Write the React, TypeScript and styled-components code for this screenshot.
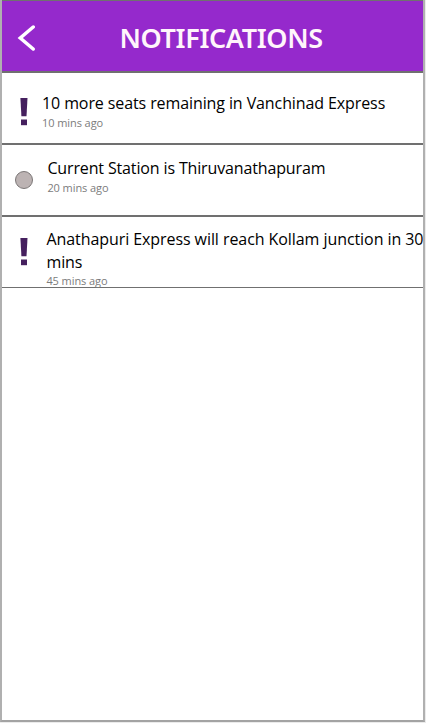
import React from "react";
import styled, { createGlobalStyle } from "styled-components";

const GlobalStyle = createGlobalStyle`
  *, *::before, *::after { box-sizing: border-box; }
  body { margin: 0; background: #fff; overflow: hidden; }
`;

const Page = styled.div`
  width: 426px;
  height: 723px;
  padding: 0 1px 1px 0;
  background: #ebebeb;
`;

const Screen = styled.main`
  width: 425px;
  height: 722px;
  overflow: hidden;
  background: #fff;
  border: solid #b0b0b0;
  border-width: 0 2px 2px 2px;
  border-bottom-color: #a3a3a3;
  font-family: "Open Sans", "Noto Sans", sans-serif;
`;

const Header = styled.header`
  display: flex;
  align-items: center;
  height: 73px;
  padding: 2px 0 0 15px;
  background: #9529cc;
  border-top: 1px solid #707070;
  border-bottom: 2px solid #707070;
`;

const BackButton = styled.button`
  display: flex;
  width: 20px;
  height: 28px;
  padding: 0;
  border: 0;
  background: none;
`;

const Title = styled.h1`
  margin: 2px 0 0 82.5px;
  color: #fff5fb;
  font-family: "Noto Sans", sans-serif;
  font-size: 27px;
  font-weight: 600;
  line-height: 36px;
  letter-spacing: -0.37px;
  white-space: nowrap;
`;

const List = styled.ul`
  margin: 0;
  padding: 0;
  list-style: none;
`;

const Item = styled.li<{ $last?: boolean }>`
  display: flex;
  height: ${(p) => (p.$last ? 71 : 72)}px;
  border-bottom: ${(p) => (p.$last ? 1 : 2)}px solid #707070;
`;

const Marker = styled.div<{ $top: number; $left: number }>`
  flex: none;
  width: 40px;
  padding: ${(p) => p.$top}px 0 0 ${(p) => p.$left}px;

  svg { display: block; }
`;

const Copy = styled.div<{ $top: number; $indent: number }>`
  flex: none;
  padding: ${(p) => p.$top}px 0 0 ${(p) => p.$indent}px;
`;

const Message = styled.p<{ $spacing: number }>`
  margin: 0;
  color: #000;
  font-size: 16px;
  font-weight: 400;
  line-height: 23px;
  letter-spacing: ${(p) => p.$spacing}px;
  white-space: pre;
`;

const Time = styled.time<{ $tight: boolean }>`
  display: block;
  margin-top: ${(p) => (p.$tight ? -1 : 0)}px;
  color: #7c7c7c;
  font-size: 11px;
  line-height: 15px;
  letter-spacing: -0.08px;
  white-space: nowrap;
`;

const Alert = () => (
  <svg width="8" height="28" viewBox="0 0 8 28" fill="#45205e" aria-hidden="true">
    <path d="M0.4 0H7.5L6.5 18.3H1.4Z" />
    <path d="M1 21.5H7V27.2H1Z" />
  </svg>
);

const Dot = () => (
  <svg width="18" height="18" viewBox="0 0 18 18" aria-hidden="true">
    <circle cx="9" cy="9" r="8.5" fill="#bcb3b3" stroke="#7b7777" />
  </svg>
);

const notifications = [
  { kind: "alert", text: "10 more seats remaining in Vanchinad Express", time: "10 mins ago", top: 19, indent: 0, markerTop: 25, spacing: -0.1 },
  { kind: "dot", text: "Current Station is Thiruvanathapuram", time: "20 mins ago", top: 12, indent: 5.4, markerTop: 26, spacing: -0.14 },
  { kind: "alert", text: "Anathapuri Express will reach Kollam junction in 30\nmins", time: "45 mins ago", top: 11, indent: 4.4, markerTop: 21, spacing: -0.07 },
];

export default function App() {
  return (
    <Page>
      <GlobalStyle />
      <Screen>
        <Header>
          <BackButton aria-label="Back">
            <svg width="20" height="28" viewBox="0 0 20 28" fill="none" aria-hidden="true">
              <path d="M16.2 4L3.3 15L16.2 26" stroke="#fff" strokeWidth="3.5" strokeLinecap="round" />
            </svg>
          </BackButton>
          <Title>NOTIFICATIONS</Title>
        </Header>
        <List>
          {notifications.map((n, i) => (
            <Item key={n.time} $last={i === notifications.length - 1}>
              <Marker $top={n.markerTop} $left={n.kind === "dot" ? 13 : 18}>
                {n.kind === "dot" ? <Dot /> : <Alert />}
              </Marker>
              <Copy $top={n.top} $indent={n.indent}>
                <Message $spacing={n.spacing}>{n.text}</Message>
                <Time $tight={n.text.includes("\n")}>{n.time}</Time>
              </Copy>
            </Item>
          ))}
        </List>
      </Screen>
    </Page>
  );
}
